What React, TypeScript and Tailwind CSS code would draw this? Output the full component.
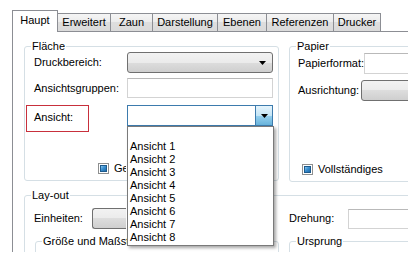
import React from "react";

const F = { fontFamily: '"Liberation Sans", Arial, sans-serif' };

function Arrow() {
  return (
    <svg width="7" height="4" viewBox="0 0 7 4" className="block">
      <polygon points="0,0 7,0 3.5,4" fill="#000" />
    </svg>
  );
}

function Check() {
  return (
    <div className="w-[11px] h-[11px] border border-[#8e8f8f] bg-white flex items-center justify-center shrink-0">
      <div className="w-[7px] h-[7px] border border-[#1d5a8c] bg-[linear-gradient(135deg,#8cc8ef_0%,#3a8fd0_45%,#1f6aa8_100%)]" />
    </div>
  );
}

const btnGrad =
  "bg-[linear-gradient(to_bottom,#f2f2f2_0%,#ebebeb_50%,#dddddd_50%,#cfcfcf_100%)]";

function Group({
  title,
  className,
  legendClass,
  children,
}: {
  title: string;
  className?: string;
  legendClass?: string;
  children?: React.ReactNode;
}) {
  return (
    <fieldset className={"border border-[#d5dfe5] rounded-[3px] p-0 m-0 min-w-0 " + (className ?? "")}>
      <legend className={"ml-[6px] px-[1px] text-[11px] leading-[13px] " + (legendClass ?? "")}>{title}</legend>
      {children}
    </fieldset>
  );
}

function Tab({ label, w }: { label: string; w: string }) {
  return (
    <div
      className={
        "h-[18px] border-t border-r border-[#8c8e94] bg-[linear-gradient(to_bottom,#f5f5f5_0%,#ebebeb_50%,#dedede_50%,#dadada_100%)] flex items-center justify-center text-[11px] leading-none " +
        w
      }
    >
      {label}
    </div>
  );
}

export default function App() {
  const items = ["", "Ansicht 1", "Ansicht 2", "Ansicht 3", "Ansicht 4", "Ansicht 5", "Ansicht 6", "Ansicht 7", "Ansicht 8"];
  return (
    <div className="w-[408px] h-[269px] bg-white overflow-hidden relative text-black" style={F}>
      {/* tab strip */}
      <div className="flex items-end h-[31px] pt-[10px] pl-[12px]">
        <div className="relative z-10 -mb-px w-[46px] h-[22px] border-l border-t border-r border-[#8c8e94] bg-white flex items-center justify-center text-[11px] leading-none pb-[2px]">
          Haupt
        </div>
        <Tab label="Erweitert" w="w-[53px]" />
        <Tab label="Zaun" w="w-[42px]" />
        <Tab label="Darstellung" w="w-[65px]" />
        <Tab label="Ebenen" w="w-[49px]" />
        <Tab label="Referenzen" w="w-[67px]" />
        <Tab label="Drucker" w="w-[47px]" />
      </div>

      {/* panel */}
      <div className="ml-[12px] w-[420px] h-[221px] border-l border-t border-[#8c8e94] overflow-hidden pt-[8px] pl-[11px] text-[11px]">
        <div className="flex">
          {/* Fläche */}
          <Group title="Fläche" className="w-[255px] h-[141px] shrink-0">
            <div className="pl-[9px]">
              <div className="flex items-center h-[21px] -mt-px">
                <div className="w-[93px]">Druckbereich:</div>
                <div className={"w-[146px] h-[21px] border border-[#707070] rounded-[3px] flex items-center justify-end pr-[6px] " + btnGrad}>
                  <Arrow />
                </div>
              </div>
              <div className="flex items-center h-[20px] mt-[5px]">
                <div className="w-[93px]">Ansichtsgruppen:</div>
                <div className="w-[146px] h-[20px] border border-[#d3d3d3] border-t-[#b9b9b9] bg-white" />
              </div>
              <div className="relative flex items-center h-[21px] mt-[7px]">
                <div className="w-[93px] pt-[4px]">Ansicht:</div>
                <div className="w-[146px] h-[21px] border border-[#3d7bad] bg-white flex justify-end">
                  <div className="w-[17px] h-full border-l border-[#3d7bad] bg-[linear-gradient(to_bottom,#e5f4fc_0%,#c4e5f6_50%,#98d1ef_50%,#68b3db_100%)] flex items-center justify-center">
                    <Arrow />
                  </div>
                </div>
                <div className="absolute left-[-8px] top-0 w-[63px] h-[27px] border border-[#c8303c]" />
              </div>
              <div className="flex items-center h-[13px] mt-[36px] pl-[64px] gap-[5px]">
                <Check />
                <span className="w-[12px] overflow-hidden whitespace-nowrap">Ge</span>
              </div>
            </div>
          </Group>

          {/* Papier */}
          <Group title="Papier" className="ml-[10px] w-[140px] h-[142px] shrink-0">
            <div className="pl-[8px]">
              <div className="flex items-center h-[21px]">
                <div className="w-[75px] whitespace-nowrap">Papierformat:</div>
                <div className="w-[80px] h-[21px] border border-[#d3d3d3] border-t-[#b9b9b9] bg-white" />
              </div>
              <div className="flex items-center h-[21px] mt-[6px]">
                <div className="w-[75px] whitespace-nowrap">Ausrichtung:</div>
                <div className={"w-[80px] h-[21px] border border-[#707070] rounded-[3px] " + btnGrad} />
              </div>
              <div className="flex items-center h-[13px] mt-[62px] pl-[4px] gap-[5px]">
                <Check />
                <span className="whitespace-nowrap">Vollständiges</span>
              </div>
            </div>
          </Group>
        </div>

        {/* Lay-out */}
        <Group title="Lay-out" className="mt-[7px] w-[420px] h-[80px]">
          <div className="pl-[9px]">
            <div className="flex items-center h-[21px] mt-[6px]">
              <div className="w-[255px] shrink-0 flex items-center">
                <div className="w-[58px]">Einheiten:</div>
                <div className={"w-[34px] h-[21px] border border-[#707070] border-r-0 rounded-l-[3px] " + btnGrad} />
              </div>
              <div className="w-[59px] shrink-0">Drehung:</div>
              <div className="w-[80px] h-[20px] border border-[#d3d3d3] border-t-[#b9b9b9] bg-white shrink-0" />
            </div>
            <div className="flex mt-[6px]">
              <Group title="Größe und Maßsta" className="ml-[1px] w-[244px] h-[40px] shrink-0" legendClass="w-[85px] overflow-hidden whitespace-nowrap pr-0" />
              <Group title="Ursprung" className="ml-[10px] w-[140px] h-[40px] shrink-0" />
            </div>
          </div>
        </Group>
      </div>

      {/* open dropdown list */}
      <div className="absolute left-[127px] top-[126px] w-[147px] h-[120px] bg-white border border-[#7a7a7a] shadow-[2px_2px_3px_rgba(0,0,0,0.35)] text-[11px]">
        {items.map((t, i) => (
          <div key={i} className="h-[13px] leading-[13px] pl-[2px] whitespace-nowrap">
            {t}
          </div>
        ))}
      </div>
    </div>
  );
}
